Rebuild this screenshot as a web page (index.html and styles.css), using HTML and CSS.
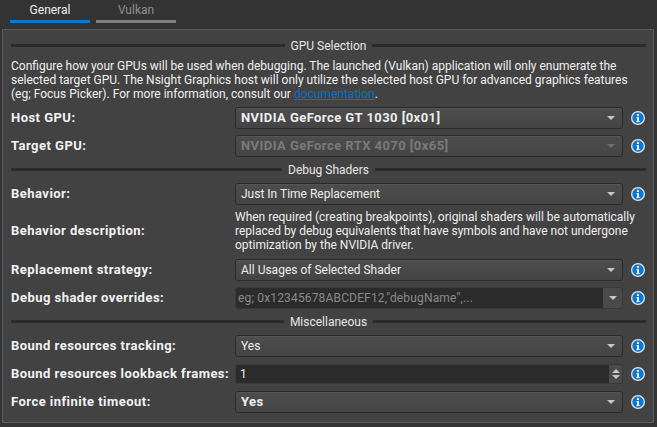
FILE: index.html
```html
<!DOCTYPE html>
<html lang="en">
<head>
<meta charset="utf-8">
<title>GPU settings</title>
<link rel="stylesheet" href="styles.css">
</head>
<body>
<svg class="defs" width="0" height="0" aria-hidden="true">
  <symbol id="info" viewBox="0 0 14 14">
    <circle cx="7" cy="7" r="7" fill="#dfe6ec"/>
    <circle cx="7" cy="7" r="5.7" fill="#0a78d0"/>
    <rect x="6" y="3" width="2" height="2" fill="#f4f8fb"/>
    <path d="M5.5 6H8V10H8.7V11H5.4V10H6.1V7H5.5Z" fill="#f4f8fb"/>
  </symbol>
</svg>
<nav class="tabs">
  <div class="tab tab-active">General</div>
  <div class="tab">Vulkan</div>
</nav>
<main class="panel">
  <div class="section s-gpu"><span>GPU Selection</span></div>
  <p class="intro">Configure how your GPUs will be used when debugging. The launched (Vulkan) application will only enumerate the selected target GPU. The Nsight Graphics host will only utilize the selected host GPU for advanced graphics features (eg; Focus Picker). For more information, consult our <a href="#">documentation</a>.</p>

  <div class="row">
    <label>Host GPU:</label>
    <div class="combo strong">NVIDIA GeForce GT 1030 [0x01]<i class="arrow"></i></div>
    <svg class="info"><use href="#info"/></svg>
  </div>
  <div class="row">
    <label>Target GPU:</label>
    <div class="combo strong disabled">NVIDIA GeForce RTX 4070 [0x65]<i class="arrow"></i></div>
    <svg class="info"><use href="#info"/></svg>
  </div>

  <div class="section"><span>Debug Shaders</span></div>

  <div class="row">
    <label>Behavior:</label>
    <div class="combo">Just In Time Replacement<i class="arrow"></i></div>
    <svg class="info"><use href="#info"/></svg>
  </div>
  <div class="row r-desc">
    <label>Behavior description:</label>
    <p class="desc">When required (creating breakpoints), original shaders will be automatically replaced by debug equivalents that have symbols and have not undergone optimization by the NVIDIA driver.</p>
  </div>
  <div class="row">
    <label>Replacement strategy:</label>
    <div class="combo">All Usages of Selected Shader<i class="arrow"></i></div>
    <svg class="info"><use href="#info"/></svg>
  </div>
  <div class="row">
    <label>Debug shader overrides:</label>
    <div class="field"><span class="placeholder">eg; 0x12345678ABCDEF12,"debugName",...</span><span class="field-btn"><i class="arrow"></i></span></div>
    <svg class="info"><use href="#info"/></svg>
  </div>

  <div class="section"><span>Miscellaneous</span></div>

  <div class="row r-tracking">
    <label>Bound resources tracking:</label>
    <div class="combo">Yes<i class="arrow"></i></div>
    <svg class="info"><use href="#info"/></svg>
  </div>
  <div class="row r-lookback">
    <label>Bound resources lookback frames:</label>
    <div class="field spin"><span class="value">1</span><span class="spin-btn"><i class="up"></i><i class="down"></i></span></div>
    <svg class="info"><use href="#info"/></svg>
  </div>
  <div class="row">
    <label>Force infinite timeout:</label>
    <div class="combo strong">Yes<i class="arrow"></i></div>
    <svg class="info"><use href="#info"/></svg>
  </div>
</main>
</body>
</html>
```

FILE: styles.css
```css
* { box-sizing: border-box; }
html, body { margin: 0; height: 100%; }
body {
  width: 657px;
  height: 427px;
  overflow: hidden;
  background: #333333;
  color: #eeeeee;
  font: 12px/14px Roboto, "Liberation Sans", sans-serif;
  padding: 0 3px 0 2px;
}
.defs { position: absolute; }

.tabs { display: flex; gap: 6px; padding-left: 8px; height: 29px; }
.tab {
  width: 80px;
  height: 23px;
  padding-top: 3px;
  text-align: center;
  color: #8f8f8f;
  border-bottom: 3px solid #808080;
}
.tab-active { color: #eeeeee; border-bottom-color: #0a78d0; }

.panel {
  height: 394px;
  background: #424242;
  border: 1px solid #5c5c5c;
  padding: 0 7px 0 8px;
}

.section {
  display: flex;
  align-items: center;
  gap: 6px;
  height: 13px;
  margin: 6px 0 7px;
  color: #e6e6e6;
}
.section::before, .section::after {
  content: "";
  flex: 1;
  height: 3px;
  background: #2b2b2b;
}
.s-gpu { margin: 9px 0 7px; }

.intro {
  margin: 0 0 6px;
  color: #f0f0f0;
  height: 42px;
}
.intro a { color: #0a6fc0; }

.row {
  display: grid;
  grid-template-columns: 224px 388px 22px;
  align-items: center;
  height: 22px;
  margin-bottom: 6px;
}
.row label {
  font-size: 13px;
  font-weight: 700;
  color: #f2f2f2;
  letter-spacing: 0.47px;
  white-space: nowrap;
}
.row:last-child { margin-bottom: 0; }
.r-desc { height: 42px; margin: -1px 0 7px; }
.r-tracking { margin-bottom: 7px; }
.r-lookback { height: 20px; margin-bottom: 7px; }

.combo, .field {
  position: relative;
  height: 22px;
  border-radius: 3px;
  white-space: nowrap;
  overflow: hidden;
}
.combo {
  padding: 3px 5px;
  background: linear-gradient(#4d4d4d, #444444);
  border: 1px solid #2a2a2a;
  box-shadow: inset 0 1px 0 #555555;
  color: #eeeeee;
}
.strong { font-size: 13px; font-weight: 700; letter-spacing: 0.44px; }
.disabled { color: #7a7a7a; }

.arrow {
  position: absolute;
  right: 7px;
  top: 8px;
  width: 0;
  height: 0;
  border-left: 4px solid transparent;
  border-right: 4px solid transparent;
  border-top: 4px solid #c8c8c8;
}
.disabled .arrow { border-top-color: #6e6e6e; }

.field {
  display: flex;
  background: #2b2b2b;
  border: 1px solid #3a3a3a;
}
.placeholder { flex: 1; padding: 3px 2px; color: #8a8a8a; letter-spacing: 0.16px; }
.field-btn {
  position: relative;
  width: 19px;
  background: #4a4a4a;
}
.field-btn .arrow { right: 5px; top: 8px; }

.spin { height: 20px; }
.value { flex: 1; padding: 2px 4px; color: #eeeeee; }
.spin-btn {
  display: flex;
  flex-direction: column;
  align-items: center;
  justify-content: center;
  gap: 2px;
  width: 13px;
  background: #4a4a4a;
}
.up, .down {
  width: 0;
  height: 0;
  border-left: 4px solid transparent;
  border-right: 4px solid transparent;
}
.up { border-bottom: 4px solid #c8c8c8; }
.down { border-top: 4px solid #c8c8c8; }

.info {
  width: 14px;
  height: 14px;
  justify-self: end;
}

.desc {
  grid-column: 2 / 4;
  margin: 0;
  color: #eeeeee;
}
```
